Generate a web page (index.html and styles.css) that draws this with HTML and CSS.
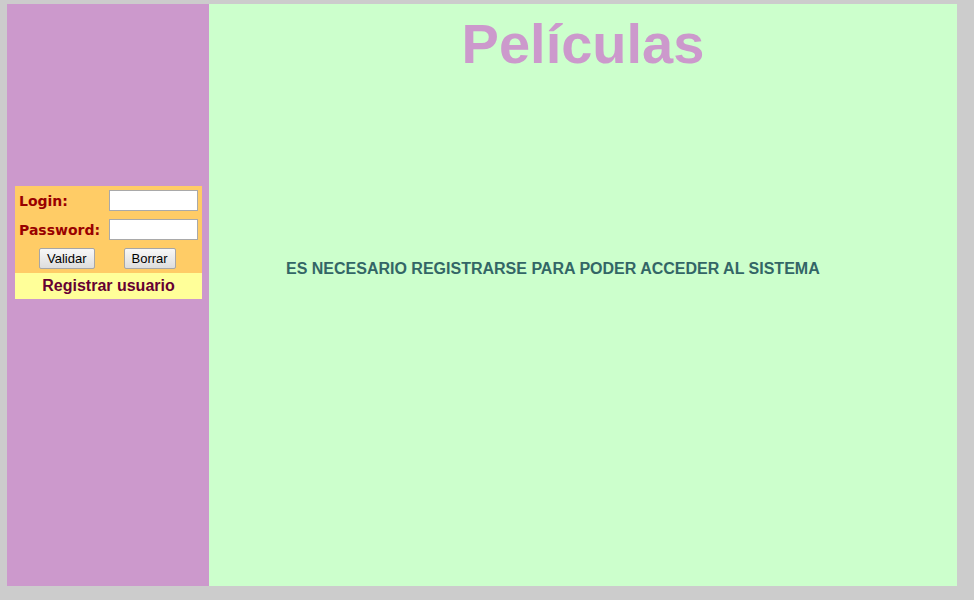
FILE: index.html
```html
<!DOCTYPE html>
<html lang="es">
<head>
<meta charset="utf-8">
<title>Películas</title>
<link rel="stylesheet" href="styles.css">
</head>
<body>
<div class="frame">
  <aside class="sidebar">
    <div class="login">
      <form class="login-form">
        <label class="label" for="login">Login:</label>
        <input class="field" id="login" type="text">
        <label class="label" for="password">Password:</label>
        <input class="field" id="password" type="password">
        <div class="buttons">
          <button type="button" class="btn">Validar</button>
          <button type="reset" class="btn">Borrar</button>
        </div>
      </form>
      <div class="register">Registrar usuario</div>
    </div>
  </aside>
  <main class="content">
    <h1 class="title">Películas</h1>
    <p class="notice">ES NECESARIO REGISTRARSE PARA PODER ACCEDER AL SISTEMA</p>
  </main>
</div>
</body>
</html>
```
FILE: styles.css
```css
html, body {
  margin: 0;
  padding: 0;
  background: #cccccc;
}
body {
  width: 974px;
  height: 600px;
  overflow: hidden;
  font-family: "Liberation Sans", Arial, sans-serif;
}
.frame {
  display: flex;
  padding: 4px 17px 14px 7px;
  height: 582px;
}
.sidebar {
  width: 202px;
  flex: none;
  background: #cc99cc;
}
.login {
  margin: 182px 0 0 8px;
  width: 187px;
}
.login-form {
  margin: 0;
  background: #ffcc66;
  padding: 4px 4px 4px 0;
  display: grid;
  grid-template-columns: 94px 89px;
  row-gap: 8px;
  align-items: center;
}
.label {
  padding-left: 4px;
  font-family: "DejaVu Sans", Verdana, sans-serif;
  font-weight: bold;
  font-size: 14px;
  color: #990000;
}
.field {
  width: 89px;
  height: 21px;
  box-sizing: border-box;
  border: 1px solid #a9a9a9;
  background: #ffffff;
  padding: 0 2px;
  margin: 0;
}
.buttons {
  grid-column: 1 / -1;
  display: flex;
  gap: 29px;
  padding-left: 24px;
}
.btn {
  height: 21px;
  margin: 0;
  padding: 0 7px;
  font-family: "Liberation Sans", Arial, sans-serif;
  font-size: 13px;
  color: #000;
  border: 1px solid #a6a6a6;
  border-radius: 2px;
  background: linear-gradient(#f8f8f8, #dddddd);
}
.register {
  background: #ffff99;
  height: 26px;
  line-height: 26px;
  text-align: center;
  font-weight: bold;
  font-size: 16px;
  color: #660033;
}
.content {
  flex: 1;
  background: #ccffcc;
  min-width: 0;
}
.title {
  margin: 9px 0 0;
  text-align: center;
  font-size: 56px;
  line-height: 62px;
  font-weight: bold;
  color: #cc99cc;
}
.notice {
  margin: 185px 0 0 77px;
  font-size: 16px;
  line-height: 18px;
  font-weight: bold;
  color: #336666;
}
```
